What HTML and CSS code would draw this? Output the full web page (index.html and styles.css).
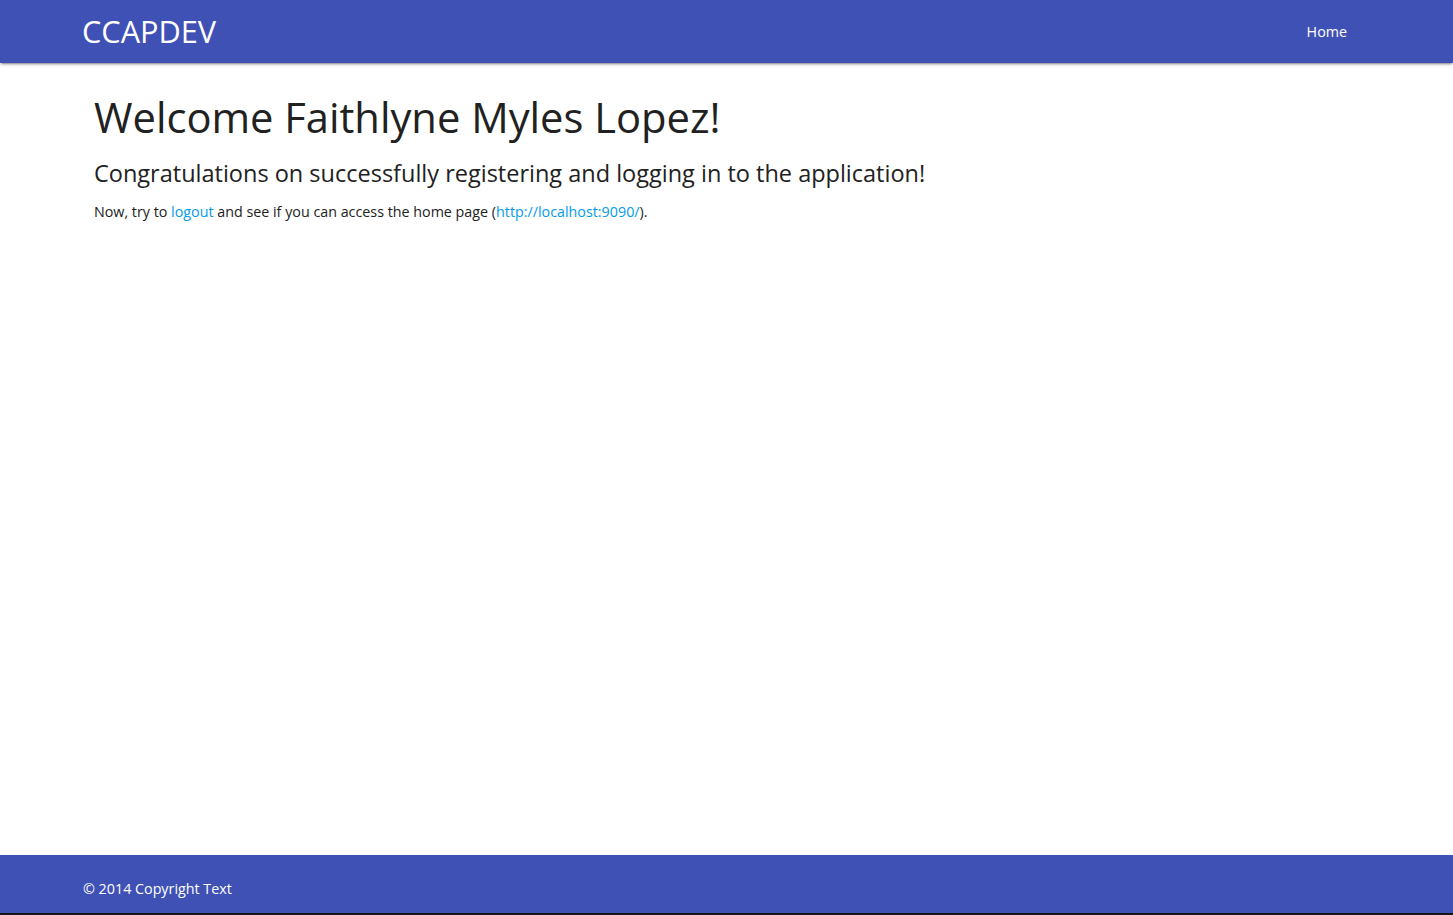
FILE: index.html
```html
<!DOCTYPE html>
<html lang="en">
<head>
<meta charset="utf-8">
<title>CCAPDEV</title>
<link rel="stylesheet" href="styles.css">
</head>
<body>
<nav class="nav">
  <div class="nav-inner">
    <a class="brand" href="#">CCAPDEV</a>
    <ul class="nav-links">
      <li><a href="#">Home</a></li>
    </ul>
  </div>
</nav>
<main class="main">
  <h1 class="title">Welcome Faithlyne Myles Lopez!</h1>
  <h2 class="subtitle">Congratulations on successfully registering and logging in to the application!</h2>
  <p class="note">Now, try to <a href="#">logout</a> and see if you can access the home page (<a href="#">http://localhost:9090/</a>).</p>
</main>
<footer class="footer">
  <div class="footer-inner">© 2014 Copyright Text</div>
</footer>
</body>
</html>
```

FILE: styles.css
```css
* { box-sizing: border-box; }
html, body { margin: 0; padding: 0; }
body {
  font-family: "Open Sans", "Noto Sans", sans-serif;
  color: #212121;
  background: #fff;
  min-height: 100vh;
  display: flex;
  flex-direction: column;
}
a { text-decoration: none; }
.nav {
  background: #3f51b5;
  height: 63px;
  box-shadow: 0 2px 2px 0 rgba(0,0,0,0.14), 0 1px 5px 0 rgba(0,0,0,0.12), 0 3px 1px -2px rgba(0,0,0,0.2);
  position: relative;
  z-index: 1;
}
.nav-inner {
  height: 100%;
  display: flex;
  align-items: center;
  justify-content: space-between;
  padding: 0 91px 0 82px;
}
.brand {
  color: #fff;
  font-size: 30.7px;
  line-height: 1;
}
.nav-links { list-style: none; margin: 0; padding: 0 0 2px; display: flex; }
.nav-links a { color: #fff; font-size: 14.3px; padding: 0 15px; }
.main {
  flex: 1;
  padding: 0 94px;
}
.title {
  font-weight: 400;
  font-size: 41.7px;
  margin: 31px 0 0;
  line-height: 1.1;
}
.subtitle {
  font-weight: 400;
  font-size: 23.5px;
  margin: 19px 0 0;
  line-height: 1.2;
}
.note {
  font-size: 14.3px;
  margin: 15px 0 0;
}
.note a { color: #039be5; }
.footer {
  background: #3f51b5;
  height: 60px;
  border-bottom: 2px solid #151515;
  color: #fff;
  display: flex;
  align-items: center;
}
.footer-inner {
  padding: 8px 0 0 83px;
  font-size: 14.3px;
}
```
